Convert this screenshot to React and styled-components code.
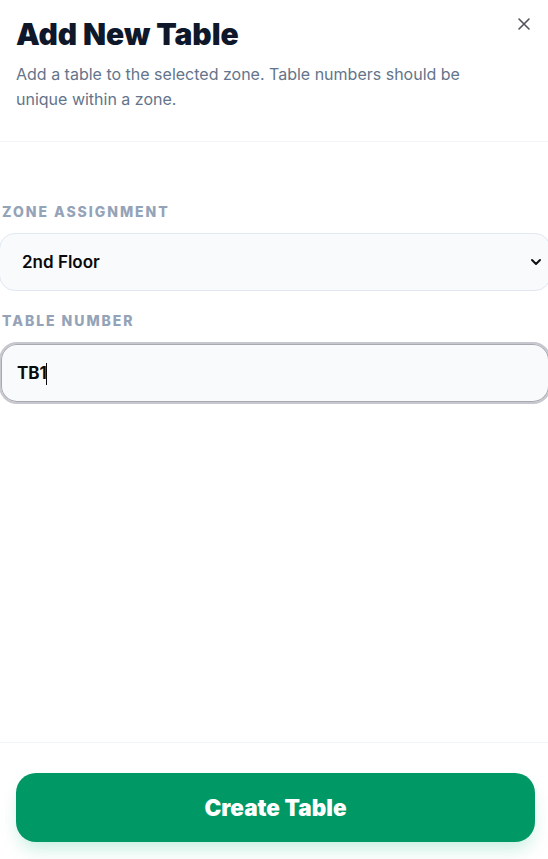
import React from "react";
import styled, { createGlobalStyle } from "styled-components";

const GlobalStyle = createGlobalStyle`
  html, body {
    margin: 0;
    padding: 0;
    background: #ffffff;
    font-family: Inter, "Noto Sans", "Liberation Sans", sans-serif;
    overflow: hidden;
  }
`;

const Sheet = styled.div`
  width: 548px;
  height: 859px;
  display: flex;
  flex-direction: column;
  background: #fff;
  overflow: hidden;
  position: relative;
`;

const Header = styled.header`
  position: relative;
  padding: 16px 48px 29px 16px;
  border-bottom: 1px solid #f1f5f9;
`;

const Title = styled.h2`
  margin: 0;
  font-size: 30px;
  line-height: 36px;
  font-weight: 900;
  letter-spacing: -0.05px;
  color: #0f172a;
`;

const Description = styled.p`
  margin: 10px 0 0;
  font-size: 16px;
  line-height: 25px;
  color: #64748b;
`;

const CloseButton = styled.button`
  position: absolute;
  top: 14px;
  right: 14px;
  width: 20px;
  height: 20px;
  padding: 0;
  border: 0;
  background: transparent;
  color: #52525b;
  display: flex;
  align-items: center;
  justify-content: center;
`;

const Body = styled.div`
  flex: 1;
  display: flex;
  flex-direction: column;
  gap: 20px;
  padding-top: 60px;
  margin-left: -1px;
  width: 552px;
`;

const Field = styled.div`
  display: flex;
  flex-direction: column;
  gap: 11px;
`;

const Label = styled.label`
  padding-left: 3px;
  font-size: 14px;
  line-height: 20px;
  font-weight: 800;
  letter-spacing: 0.14em;
  text-transform: uppercase;
  color: #94a3b8;
`;

const SelectWrap = styled.div`
  position: relative;
`;

const Select = styled.select`
  appearance: none;
  width: 100%;
  height: 58px;
  box-sizing: border-box;
  padding: 0 40px 0 22px;
  border: 1px solid #e2e8f0;
  border-radius: 16px;
  background: #f8fafc;
  font-family: inherit;
  font-size: 17px;
  font-weight: 600;
  color: #0a0a0a;
  outline: none;
`;

const Chevron = styled.svg`
  position: absolute;
  right: 9px;
  top: 24px;
  pointer-events: none;
`;

const InputWrap = styled.div`
  position: relative;
`;

const Input = styled.input`
  width: 100%;
  height: 62px;
  box-sizing: border-box;
  padding: 0 16px;
  border: 2px solid #c7c7cf;
  box-shadow: inset 0 0 0 1px #a8a8b0;
  border-radius: 18px;
  background: #f8fafc;
  font-family: inherit;
  font-size: 17px;
  font-weight: 700;
  color: #0a0a0a;
  outline: none;
  caret-color: transparent;
`;

const Caret = styled.span`
  position: absolute;
  left: ${(p) => p.$left}px;
  top: 21px;
  width: 1px;
  height: 22px;
  background: #0a0a0a;
  pointer-events: none;
`;

const Footer = styled.footer`
  border-top: 1px solid #f1f5f9;
  padding: 30px 13px 17px 16px;
`;

const PrimaryButton = styled.button`
  width: 100%;
  height: 69px;
  border: 0;
  border-radius: 20px;
  background: #009966;
  color: #fff;
  font-family: inherit;
  font-size: 22.5px;
  font-weight: 900;
  letter-spacing: 0;
  box-shadow: 0 10px 18px -4px rgba(16, 185, 129, 0.25);
`;

export default function App() {
  return (
    <Sheet>
      <GlobalStyle />
      <Header>
        <Title>Add New Table</Title>
        <Description>
          Add a table to the selected zone. Table numbers should be unique within a zone.
        </Description>
        <CloseButton aria-label="Close">
          <svg width="14" height="14" viewBox="0 0 14 14" fill="none" stroke="currentColor" strokeWidth="1.6" strokeLinecap="round">
            <path d="M2 2 L12 12 M12 2 L2 12" />
          </svg>
        </CloseButton>
      </Header>

      <Body>
        <Field>
          <Label>Zone Assignment</Label>
          <SelectWrap>
            <Select defaultValue="2">
              <option value="1">1st Floor</option>
              <option value="2">2nd Floor</option>
            </Select>
            <Chevron width="12" height="10" viewBox="0 0 12 10" fill="none" stroke="#111" strokeWidth="2" strokeLinecap="round" strokeLinejoin="round">
              <path d="M2 3 L6 7 L10 3" />
            </Chevron>
          </SelectWrap>
        </Field>
        <Field>
          <Label>Table Number</Label>
          <InputWrap>
            <Input defaultValue="TB1" autoFocus />
            <Caret $left={47} />
          </InputWrap>
        </Field>
      </Body>

      <Footer>
        <PrimaryButton>Create Table</PrimaryButton>
      </Footer>
    </Sheet>
  );
}
